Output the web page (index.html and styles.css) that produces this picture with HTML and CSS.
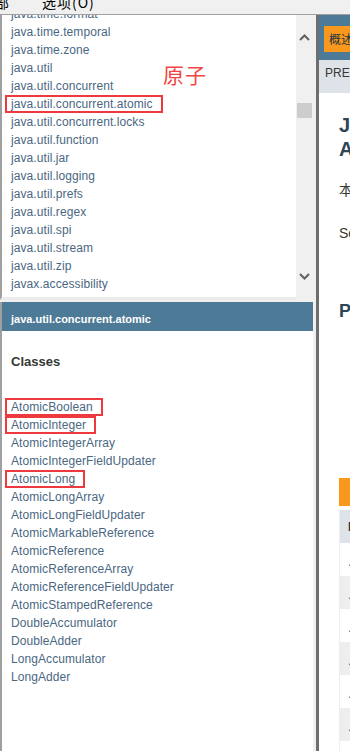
FILE: index.html
```html
<!DOCTYPE html>
<html lang="zh">
  <head>
    <meta charset="utf-8">
    <title>Java API</title>
    <link rel="stylesheet" href="styles.css">
  </head>
  <body>

  <div class="menubar">
    <div class="menu-row">
      <span class="menu menu-cut">部</span>
      <span class="menu menu-opt">选项(O)</span>
    </div>
  </div>

  <div class="frames">
    <div class="leftcol">

      <div class="pkgframe">
        <div class="pkglist">
          <ul class="links pkgs">
            <li>java.time.format</li>
            <li>java.time.temporal</li>
            <li>java.time.zone</li>
            <li>java.util</li>
            <li>java.util.concurrent</li>
            <li><span class="mark">java.util.concurrent.atomic</span></li>
            <li>java.util.concurrent.locks</li>
            <li>java.util.function</li>
            <li>java.util.jar</li>
            <li>java.util.logging</li>
            <li>java.util.prefs</li>
            <li>java.util.regex</li>
            <li>java.util.spi</li>
            <li>java.util.stream</li>
            <li>java.util.zip</li>
            <li>javax.accessibility</li>
            <li>javax.activation</li>
          </ul>
          <span class="note">原子</span>
        </div>
        <div class="scrollbar">
          <div class="sb-btn sb-up">
            <svg width="11" height="7" viewBox="0 0 11 7"><polyline points="1,6 5.5,1.5 10,6" fill="none" stroke="#606060" stroke-width="2"/></svg>
          </div>
          <div class="sb-track"><div class="sb-thumb"></div></div>
          <div class="sb-btn sb-down">
            <svg width="11" height="7" viewBox="0 0 11 7"><polyline points="1,1 5.5,5.5 10,1" fill="none" stroke="#606060" stroke-width="2"/></svg>
          </div>
        </div>
      </div>

      <div class="hsplit"></div>

      <div class="clsframe">
        <h1 class="bar">java.util.concurrent.atomic</h1>
        <h2 class="cls-title">Classes</h2>
        <ul class="links classes">
          <li><span class="mark">AtomicBoolean</span></li>
          <li><span class="mark">AtomicInteger</span></li>
          <li>AtomicIntegerArray</li>
          <li>AtomicIntegerFieldUpdater</li>
          <li><span class="mark">AtomicLong</span></li>
          <li>AtomicLongArray</li>
          <li>AtomicLongFieldUpdater</li>
          <li>AtomicMarkableReference</li>
          <li>AtomicReference</li>
          <li>AtomicReferenceArray</li>
          <li>AtomicReferenceFieldUpdater</li>
          <li>AtomicStampedReference</li>
          <li>DoubleAccumulator</li>
          <li>DoubleAdder</li>
          <li>LongAccumulator</li>
          <li>LongAdder</li>
        </ul>
      </div>

    </div>

    <div class="vsplit"></div>

    <div class="rightframe">
      <div class="topnav"><span class="tab">概述</span></div>
      <div class="subnav">PREV&nbsp;&nbsp;NEXT</div>
      <div class="content">
        <h1 class="title">Java™ Platform, Standard Edition 8<br>API 规范</h1>
        <p class="intro">本文档是 Java™ Platform, Standard Edition 的 API 规范。</p>
        <p class="see">See: <a href="#">Description</a></p>
        <h2 class="profiles">Profiles</h2>
        <div class="caption"></div>
        <div class="table">
          <div class="row head">Profile</div>
          <div class="row">.compact1</div>
          <div class="row alt">.compact2</div>
          <div class="row">.compact3</div>
          <div class="row alt">.applet</div>
          <div class="row">.awt</div>
          <div class="row alt">.color</div>
          <div class="row">.datatransfer</div>
        </div>
      </div>
    </div>
  </div>

  </body>
</html>
```

FILE: styles.css
```css
html {
  height: 100%;
}
body {
  margin: 0;
  width: 350px;
  height: 751px;
  overflow: hidden;
  background: #ffffff;
  font-family: "Liberation Sans", Arial, "Noto Sans CJK SC", sans-serif;
  color: #353833;
}

/* window menu, cut off at the top */
.menubar {
  height: 14px;
  border-bottom: 1px solid #a0a0a0;
  background: #f0f0f0;
  overflow: hidden;
}
.menu-row {
  display: flex;
  margin-top: -5px;
  white-space: nowrap;
}
.menu {
  font-family: "Noto Sans CJK SC", sans-serif;
  font-size: 14px;
  line-height: 14px;
  color: #000000;
}
.menu-cut {
  margin-left: -5px;
}
.menu-opt {
  margin-left: 33px;
  letter-spacing: 1px;
}

.frames {
  display: flex;
  height: 736px;
}
.leftcol {
  width: 313px;
  display: flex;
  flex-direction: column;
}

/* package frame */
.pkgframe {
  height: 285px;
  display: flex;
}
.pkglist {
  position: relative;
  flex: 1;
  overflow: hidden;
  border-left: 2px solid #a0a0a0;
  border-bottom: 3px solid #ececec;
}
.links {
  list-style: none;
  margin: 0;
  padding: 0 0 0 9px;
  font-size: 12px;
  line-height: 18px;
  letter-spacing: 0.08px;
  color: #4a6782;
  white-space: nowrap;
}
.links li {
  height: 18px;
}
.pkgs {
  margin-top: -10px;
}
.mark {
  display: inline-block;
  box-sizing: border-box;
  height: 18px;
  line-height: 14px;
  margin-left: -6px;
  padding: 0 8px 0 4px;
  border: 2px solid #ee3a3f;
}
.note {
  position: absolute;
  left: 161px;
  top: 49px;
  font-family: "Noto Sans CJK SC", sans-serif;
  font-size: 21px;
  line-height: 21px;
  letter-spacing: 1px;
  color: #f04545;
}

.scrollbar {
  width: 17px;
  background: #f0f0f0;
  display: flex;
  flex-direction: column;
}
.sb-btn {
  height: 17px;
  display: flex;
  align-items: center;
  justify-content: center;
}
.sb-up {
  margin-top: 14px;
}
.sb-down {
  margin-bottom: 15px;
}
.sb-track {
  flex: 1;
}
.sb-thumb {
  margin: 57px 1px 0 1px;
  height: 15px;
  background: #cdcdcd;
}

.hsplit {
  height: 2px;
  background: #f0f0f0;
}

/* class frame */
.clsframe {
  flex: 1;
  border-left: 2px solid #a0a0a0;
  background: #ffffff;
}
.bar {
  margin: 0;
  height: 29px;
  box-sizing: border-box;
  padding: 9px 5px 4px 9px;
  background: #4d7a97;
  color: #ffffff;
  font-size: 11px;
  line-height: 16px;
  font-weight: bold;
}
.cls-title {
  margin: 22px 0 0 0;
  padding-left: 9px;
  font-size: 13px;
  line-height: 18px;
  font-weight: bold;
  color: #353833;
}
.classes {
  margin-top: 27px;
}

.vsplit {
  width: 3px;
  background: #f0f0f0;
  border-right: 3px solid #6e6e6e;
}

/* overview frame */
.rightframe {
  flex: 1;
  overflow: hidden;
  background: #ffffff;
}
.topnav {
  height: 45px;
  box-sizing: border-box;
  padding: 11px 0 0 5px;
  background: #4d7a97;
  white-space: nowrap;
}
.tab {
  display: inline-block;
  height: 26px;
  padding: 0 8px 0 5px;
  background: #f8981d;
  color: #253441;
  font-family: "Noto Sans CJK SC", sans-serif;
  font-size: 12px;
  line-height: 26px;
}
.subnav {
  height: 33px;
  box-sizing: border-box;
  padding: 6px 0 0 6px;
  background: #dee3e9;
  font-size: 12px;
  line-height: 14px;
  white-space: nowrap;
}
.content {
  width: 400px;
  padding-left: 20px;
  white-space: nowrap;
}
.title {
  margin: 20px 0 0 0;
  font-size: 20px;
  line-height: 24px;
  font-weight: bold;
  color: #2c4557;
}
.intro {
  margin: 20px 0 0 0;
  font-size: 14px;
  line-height: 18px;
}
.see {
  margin: 25px 0 0 0;
  font-size: 14px;
  line-height: 18px;
}
.see a {
  color: #4a6782;
  text-decoration: none;
}
.profiles {
  margin: 58px 0 0 0;
  font-size: 18px;
  line-height: 22px;
  font-weight: bold;
  color: #2c4557;
}
.caption {
  margin-top: 156px;
  width: 200px;
  height: 28px;
  background: #f8981d;
}
.table {
  margin-top: 4px;
  border-left: 1px solid #eeeeee;
}
.row {
  height: 33px;
  box-sizing: border-box;
  padding: 12px 0 0 8px;
  font-size: 12px;
  line-height: 14px;
  color: #4a6782;
}
.row.head {
  padding-top: 10px;
  background: #dee3e9;
  color: #253441;
  font-weight: bold;
}
.row.alt {
  background: #eeeeee;
}
```
